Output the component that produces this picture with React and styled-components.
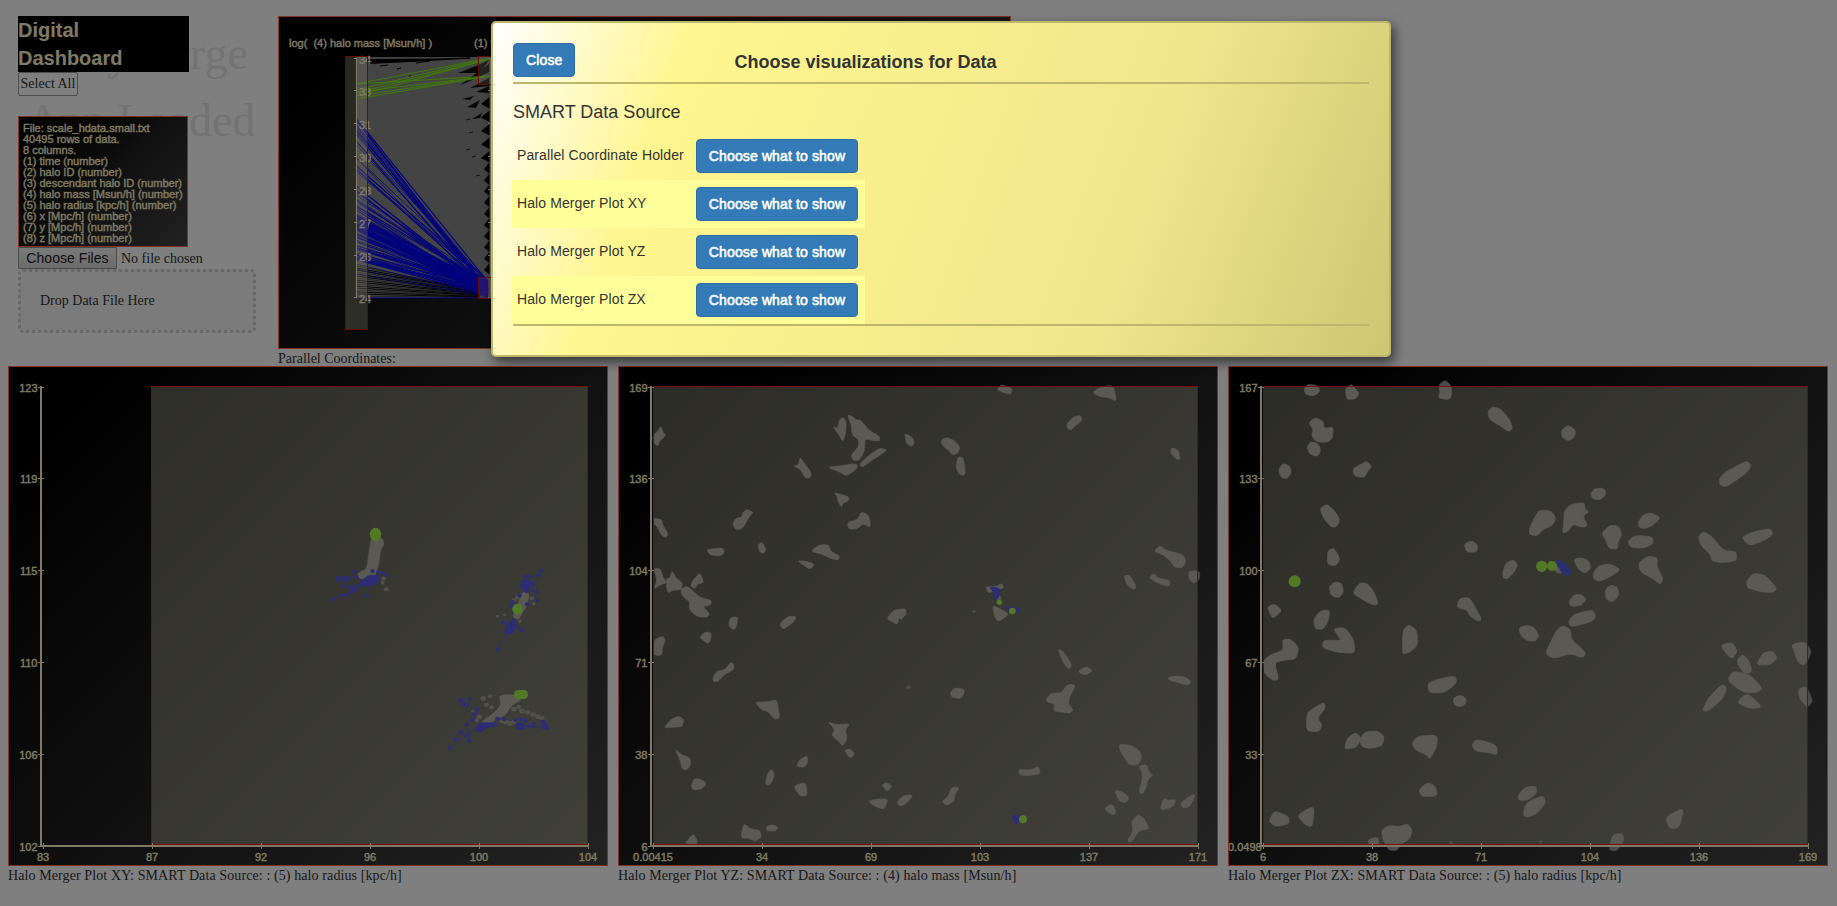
import React from "react";
import styled, { createGlobalStyle } from "styled-components";

const sans = '"Liberation Sans", Arial, sans-serif';
const serif = '"Liberation Serif", "Times New Roman", serif';

const GlobalStyle = createGlobalStyle`
  *, *::before, *::after { box-sizing: border-box; }
  html, body { margin: 0; height: 100%; background: #fff; overflow: hidden; }
  body { font: 14px/16px ${serif}; color: #333; }
`;

const Page = styled.div`
  position: relative;
  width: 1837px;
  height: 906px;
  padding: 16px 9px 0 8px;
  overflow: hidden;
`;

const TopRow = styled.div`
  display: flex;
  height: 350px;
  padding-left: 10px;
  gap: 22px;
`;

const Sidebar = styled.aside`
  position: relative;
  width: 238px;
  display: flex;
  flex-direction: column;
  align-items: flex-start;
  > * { position: relative; }
`;

const Status = styled.div`
  && { position: absolute; }
  top: 4px;
  left: 0;
  width: 246px;
  text-align: center;
  font-size: 46px;
  line-height: 67px;
  color: #e6e6e6;
`;

const StatusLine = styled.div`
  padding-left: ${(p) => p.$indent || 0}px;
`;

const Brand = styled.h1`
  margin: 0;
  width: 171px;
  height: 56px;
  padding-right: 60px;
  background: #000;
  color: #fff5cc;
  font: bold 20px/28px ${sans};
`;

const SelectAll = styled.button`
  width: 60px;
  height: 24px;
  padding: 0;
  border: 1px solid #999;
  border-radius: 2px;
  background: transparent;
  font: 14px/16px ${serif};
  color: #333;
  white-space: nowrap;
`;

const gradientPanel = "linear-gradient(135deg, #000 8%, #444 100%)";

const FileInfo = styled.div`
  margin-top: 20px;
  width: 170px;
  height: 131px;
  padding: 6px 0 0 4px;
  border: 1px solid tomato;
  background: ${gradientPanel};
  color: #fff5cc;
  font: 11px/11px ${sans};
  -webkit-text-stroke: 0.35px #fff5cc;
  white-space: nowrap;
`;

const FileRow = styled.div`
  display: flex;
  align-items: center;
  gap: 4px;
  height: 22px;
  span { padding-top: 2px; }
`;

const FileButton = styled.button`
  width: 99px;
  height: 22px;
  padding: 0;
  border: 1px solid #999;
  border-radius: 1px;
  background: linear-gradient(#f4f4f4, #d8d8d8);
  font: 14px/18px ${sans};
  letter-spacing: 0.05px;
  color: #222;
`;

const DropZone = styled.div`
  width: 238px;
  height: 64px;
  padding: 21px 19px;
  border: 3px dotted #cfcfcf;
  border-radius: 5px;
  background: rgba(0, 0, 0, 0.03);
`;

const Figure = styled.figure`
  margin: 0;
  width: ${(p) => p.$w}px;
`;

const Canvas = styled.div`
  height: ${(p) => p.$h}px;
  border: 1px solid tomato;
  background: ${gradientPanel};
  svg { display: block; width: 100%; height: 100%; }
  text {
    font: 11px ${sans};
    fill: #fff5cc;
    stroke: #fff5cc;
    stroke-width: 0.35px;
    white-space: pre;
  }
`;

const Caption = styled.figcaption`
  height: 18px;
  line-height: 17px;
  padding-top: 1px;
  letter-spacing: ${(p) => p.$track || 0}px;
  white-space: nowrap;
`;

const PlotRow = styled.div`
  display: flex;
  gap: 10px;
`;

const Backdrop = styled.div`
  position: absolute;
  inset: 0;
  background: rgba(0, 0, 0, 0.5);
`;

const Dialog = styled.section`
  position: absolute;
  top: 21px;
  left: 491px;
  width: 900px;
  height: 336px;
  padding: 20px;
  border: 2px solid #bdb76b;
  border-radius: 5px;
  background: linear-gradient(110deg, #fff 0%, #fff68f 20%, #f0e68c 70%, #cdc673 100%);
  box-shadow: 3px 5px 12px rgba(0, 0, 0, 0.6);
  font: 14px/20px ${sans};
  color: #333;
`;

const DialogHead = styled.header`
  display: grid;
  grid-template-columns: 62px 1fr 213px;
  height: 41px;
  border-bottom: 2px solid #bdb76b;
`;

const DialogTitle = styled.h2`
  margin: 9px 0 0;
  text-align: center;
  font: bold 18px/20px ${sans};
`;

const Button = styled.button`
  height: 34px;
  padding: 0 12px;
  border: 1px solid #2e6da4;
  border-radius: 4px;
  background: #337ab7;
  color: #fff;
  font: 14px/20px ${sans};
  letter-spacing: 0.13px;
  -webkit-text-stroke: 0.55px #fff;
  white-space: nowrap;
`;

const SourceName = styled.h3`
  margin: 18px 0 10px;
  font: 18px/20px ${sans};
`;

const Choices = styled.div`
  width: 353px;
  margin-left: -1px;
`;

const Choice = styled.div`
  display: grid;
  grid-template-columns: 179px 162px;
  height: 48px;
  padding: 7px 0 7px 5px;
  background: ${(p) => (p.$striped ? "#ff9" : "transparent")};
  span { padding-top: 6px; letter-spacing: 0.1px; }
  ${Button} { padding: 0; }
`;

const DialogFoot = styled.footer`
  border-top: 2px solid #bdb76b;
`;

/* Deterministic noise source for the line bundles. */
const makeRandom = (seed) => () => {
  seed = (seed * 16807) % 2147483647;
  return seed / 2147483647;
};

/* Closed outline of a point list, with each corner eased. */
const outline = (text) => {
  const p = text.trim().split(/\s+/).map((s) => s.split(",").map(Number));
  const lerp = (a, b, t) => `${(a[0] + (b[0] - a[0]) * t).toFixed(1)} ${(a[1] + (b[1] - a[1]) * t).toFixed(1)}`;
  const n = p.length;
  let d = "";
  p.forEach((q, i) => {
    const before = p[(i + n - 1) % n];
    const after = p[(i + 1) % n];
    d += `${i ? "L" : "M"}${lerp(q, before, 0.33)}Q${q[0]} ${q[1]} ${lerp(q, after, 0.33)}`;
  });
  return d + "Z";
};

const Blobs = ({ at, scale = [1 / 3, 1 / 3], list, color = "#949494" }) => (
  <g
    transform={`translate(${at[0]} ${at[1]}) scale(${scale[0]} ${scale[1]})`}
    fill={color}
    stroke={color}
    strokeWidth="2"
    strokeLinejoin="round"
  >
    {list.trim().split("\n").map((t, i) => (
      <path key={i} d={outline(t)} />
    ))}
  </g>
);

const Dots = ({ at, scale = [1 / 3, 1 / 3], r = 4, list, color = "#00f" }) => (
  <g transform={`translate(${at[0]} ${at[1]}) scale(${scale[0]} ${scale[1]})`} fill={color}>
    {list.trim().split(/\s+/).map((t, i) => {
      const [x, y, rr] = t.split(",").map(Number);
      return <circle key={i} cx={x} cy={y} r={rr || r} />;
    })}
  </g>
);

const ScatterPlot = ({ x, brushX, yLabels, xLabels, caption, children }) => {
  const ys = [387, 478.5, 570.5, 662.5, 754, 846];
  return (
    <Figure $w={600}>
      <Canvas $h={500}>
        <svg viewBox={`${x + 1} 367 598 498`}>
          {children}
          <rect x={brushX} y="386.5" width={x + 579.5 - brushX} height="458" fill="rgba(228,226,196,.4)" stroke="#f51800" />
          <path d={`M${x + 33} 386V847M${x + 32} 846H${x + 580}`} stroke="#fff5cc" strokeWidth="2" fill="none" />
          {ys.map((y, i) => (
            <g key={i}>
              <path d={`M${x + 30} ${Math.floor(y) + 0.5}h6M${x + 35.5 + i * 109} 843v6`} stroke="#fff5cc" />
              <text x={yLabels[i].length > 4 ? x : x + 29.5} y={Math.floor(y) + 5} textAnchor={yLabels[i].length > 4 ? "start" : "end"}>
                {yLabels[i]}
              </text>
              <text x={x + 35 + i * 109} y="861" textAnchor="middle">
                {xLabels[i]}
              </text>
            </g>
          ))}
        </svg>
      </Canvas>
      <Caption $track={0.1}>{caption}</Caption>
    </Figure>
  );
};

const ParallelPlot = () => {
  const rnd = makeRandom(77);
  const blue = [];
  for (let i = 0; i < 24; i++) blue.push([118 + rnd() * 75, 280 + rnd() * 14]);
  for (let i = 0; i < 34; i++) blue.push([185 + rnd() * 45, 282 + rnd() * 14]);
  for (let i = 0; i < 56; i++) blue.push([215 + rnd() * 46, 284 + rnd() * 13]);
  const dark = [];
  for (let i = 0; i < 16; i++) dark.push([266 + i * 2, 290 + i * 0.5]);
  const labels = [["34", 58], ["33", 90], ["31", 123], ["30", 156], ["28", 189], ["27", 222], ["26", 255], ["24", 297]];
  const teeth = [];
  for (let y = 103; y < 278; y += y < 150 ? 13.5 : 11.2) teeth.push(y);
  return (
    <Canvas $h={333}>
      <svg viewBox="279 17 731 331">
        <rect x="356" y="57" width="640" height="241" fill="#888" />
        <path d="M368 59.5L440 59L470 58L420 61L368 63.5Z M380 66l8-1M397 69l4-1M409 76h2M416 63l14-2" fill="#000" stroke="#000" />
        {["458,73 476,66 489,60 480,73", "460,85 489,64 489,72 470,81", "470,88 489,78 489,86", "476,92 489,86 489,93", "462,99 474,96 470,100", "467,107 480,100 476,108", "472,119 482,113 480,118"].map((s) => (
          <polygon key={s} points={s} fill="#111" />
        ))}
        {teeth.map((y, i) => (
          <polygon key={y} points={`${i < 5 ? 481 : 484},${y + 1} 489.5,${y - 6} 489.5,${y + 5.5}`} fill="#080808" />
        ))}
        {[[466, 120], [469, 133], [466, 150], [472, 157], [476, 176]].map(([x, y]) => (
          <path key={y} d={`M${x} ${y}l4-1`} stroke="#222" />
        ))}
        {dark.map(([a, b], i) => (
          <path key={i} d={`M356 ${a}L480 ${b}`} stroke="#080808" strokeWidth={i % 3 ? 1.1 : 0.5} />
        ))}
        {blue.map(([a, b], i) => (
          <path key={i} d={`M356 ${a}L488 ${b}`} stroke="#0000f8" strokeWidth={i % 4 ? 0.75 : 1.1} />
        ))}
        {[[264, 296], [269, 297], [274, 297]].map(([a, b]) => (
          <path key={a} d={`M356 ${a}L488 ${b}`} stroke="#0000c8" strokeWidth=".7" />
        ))}
        <path d="M356 298H490" stroke="#0000d8" />
        {[[84, 58], [90, 58], [93, 59], [96, 59], [84, 76], [92, 76], [96, 76], [99, 76]].map(([a, b], i) => (
          <path key={i} d={`M356 ${a}L490 ${b}`} stroke="#7fff00" strokeWidth=".9" />
        ))}
        <rect x="345.5" y="56.5" width="22" height="273" fill="rgba(228,226,196,.35)" />
        <path d="M490.5 58V298M356.5 58V298" stroke="#fff5cc" strokeWidth="1.1" />
        {labels.map(([t, y]) => (
          <g key={t}>
            <path d={`M354 ${y + 0.5}h3M488 ${y + 0.5}h3`} stroke="#fff5cc" />
            <text x="359" y={y + 6}>{t}</text>
          </g>
        ))}
        <rect x="345.5" y="56.5" width="22" height="273" fill="none" stroke="#c81400" />
        <rect x="478.5" y="56.5" width="22" height="28" fill="rgba(228,226,196,.25)" stroke="#c81400" />
        <rect x="478.5" y="277.5" width="22" height="21" fill="rgba(228,150,196,.3)" stroke="#c81400" />
        <text x="289" y="47">{"log(  (4) halo mass [Msun/h] )"}</text>
        <text x="474" y="47">(1) time</text>
      </svg>
    </Canvas>
  );
};

const xyScale = [1 / 2.529, 1 / 2.872];
const zxScale = [1 / 2.541, 1 / 3];

const HaloXY = () => (
  <>
    <Blobs at={[0, 360]} scale={xyScale} list={`
940,510 968,512 971,530 962,545 958,585 950,612 945,628 908,628 904,612 928,600 934,545
1314,690 1318,672 1330,662 1338,675 1333,705 1318,730 1312,745 1296,738
1262,962 1310,962 1320,975 1295,990 1278,1020 1255,1030 1240,1045 1215,1042 1252,1012 1268,990`} />
    <Dots at={[0, 360]} scale={xyScale} color="#767676" list="968,640,5 977,659,6 970,628,6 1258,736 1275,732 1300,690,6 1308,682,6 1345,685,6 1350,700 1315,750,5 1222,972,7 1240,966,6 1230,990,6 1243,998,6 1195,1008 1212,1025,7 1205,1035,6 1300,1003,7 1312,996,6 1320,1008,7 1334,1012,7 1348,1018,7 1360,1024,7 1370,1028,7 1280,1040,7 1290,1044,7 1270,1038,6 1300,1040,6" />
    <g transform="translate(0 360) scale(.3954 .3482)" stroke="#00f" strokeWidth="2.5" fill="none">
      <path d="M841 688L868 676L900 660M850 625L880 630L900 615M928 678L932 645M1258 832L1285 780M1370 604L1345 650L1357 690M1137 1115L1200 1060M1151 1090L1182 1048M1182 1047L1186 1092M1165 975L1185 990M1207 1003L1197 1040M1310 1050L1385 1055" />
    </g>
    <Blobs at={[0, 360]} scale={xyScale} color="#00f" list={`
905,645 930,618 955,618 962,632 945,648 912,650
880,655 900,652 905,665 888,670
1312,650 1322,630 1345,632 1340,660 1332,672
1290,750 1302,742 1306,765 1295,788 1275,785 1280,762
1200,1065 1210,1042 1258,1042 1255,1052 1228,1055 1220,1070
1302,1045 1325,1040 1328,1062 1308,1062`} />
    <Dots at={[0, 360]} scale={xyScale} r={5.8} list="841,688 866,677 877,673 928,678 853,626 858,634 868,627 880,625 876,634 894,608,6 901,625 942,606,6 958,610 967,612 977,618 870,650 890,650 906,650 918,645 1370,604 1362,618 1348,645 1355,665 1357,690 1330,622 1341,622 1314,676 1296,695 1294,707 1333,702,6 1272,754 1284,762 1312,768 1321,777 1258,832 1137,1115 1151,1090 1165,1070 1182,1047 1182,1076 1186,1092 1165,977 1172,987 1188,974 1182,994 1207,1003 1200,1017 1195,1034 1258,1030 1275,1032 1304,1034 1318,1032 1330,1035 1338,1052 1350,1045 1373,1038 1378,1047,7 1383,1058,6 1375,1054" />
    <g fill="#7fff00">
      <ellipse cx="375.5" cy="534.3" rx="5.7" ry="6.6" />
      <circle cx="517.5" cy="609" r="5.2" />
      <rect x="514" y="690" width="14" height="9" rx="4.5" />
    </g>
  </>
);

const HaloYZ = () => (
  <>
    <Blobs at={[610, 360]} list={`
153,198 160,220 168,224 158,235 148,245 144,258 132,250 127,230 144,212
712,165 725,168 740,180 752,180 778,212 808,228 810,242 790,242 765,236 764,270 750,300 730,302 723,285 745,262 747,240 726,225 724,195
700,172 709,185 707,220 698,246 690,228 668,200 684,205 688,178
748,312 785,280 810,264 832,270 815,282 790,298 768,314 756,322
652,322 685,318 740,310 742,325 725,337 708,348 688,335
570,292 582,308 604,338 601,354 585,354 572,328 550,318 565,315
672,397 700,405 718,412 714,424 700,428 694,442 684,425 682,410
398,458 410,448 430,456 418,470 406,492 394,508 376,508 367,490 380,474 395,472
130,475 155,478 158,495 175,522 168,533 155,527 142,500 130,490
290,568 310,567 338,563 343,575 335,588 300,585
443,555 456,546 468,568 462,580 450,577
752,455 777,465 782,503 760,490 740,507 716,507 712,487 745,478
602,574 628,554 656,554 662,575 690,588 684,601 660,594 635,582
562,602 590,604 614,613 600,628 580,615
130,624 152,626 158,650 170,668 150,675 132,687 142,660
186,632 198,655 218,668 214,690 190,690 172,700 168,655 180,655
270,637 282,668 262,672 255,686 241,678 250,660
212,688 230,678 245,690 270,712 306,722 300,737 278,738 299,762 292,772 262,770 238,750 240,725 216,708
360,773 384,770 380,795 374,810 356,800
510,790 535,768 560,770 552,785 535,798 520,807 512,800
830,777 850,750 887,746 887,760 868,770 862,794 848,785
883,220 905,230 914,248 905,260 890,252`} />
    <Blobs at={[900, 360]} list={`
291,90 303,73 337,85 333,103 312,98
576,97 605,80 638,76 646,100 649,124 625,112 600,110
503,188 522,170 542,166 546,182 525,197 513,212 500,202
124,240 140,232 165,243 180,262 174,280 156,284 145,270 126,256
173,290 190,292 197,344 180,346 168,325
813,263 834,268 841,297 830,299 813,280
762,574 780,556 800,572 850,583 858,605 847,624 823,622 812,602 785,582
672,646 690,646 710,682 700,689 680,674
747,655 760,640 775,655 808,660 810,677 790,677
866,633 900,633 898,660 880,670 866,655
256,680 290,680 305,670 312,684 285,690 266,700
288,703 304,710 300,728 290,720
277,736 300,746 327,762 310,775 298,784 286,777
-3,750 15,746 19,762 0,782`} />
    <Blobs at={[610, 630]} list={`
133,28 160,18 166,32 157,50 156,76 131,76
268,22 285,6 304,8 302,30 294,42
308,145 320,123 345,120 362,96 372,103 370,120 345,132 325,154 311,156
435,216 470,216 500,209 505,235 509,264 493,268 475,245 455,240
163,294 180,270 205,258 222,268 217,290 185,292
652,274 680,285 720,281 705,300 712,325 698,349 685,332 664,317 675,298
704,360 722,356 735,375 718,385
195,356 215,375 240,383 242,402 232,420 216,417 212,395
243,470 252,446 270,446 290,460 275,477 252,480
560,410 568,390 592,376 594,395 584,412
473,430 485,417 494,435 482,464 465,464
550,468 587,456 592,497 570,499
774,513 800,508 834,506 824,538 795,530
815,465 830,457 847,468 832,485
860,517 880,496 910,495 892,518 870,530
393,615 402,580 420,596 450,601 455,620 437,634 415,624 396,624
468,590 485,584 504,590 497,604 470,602
223,642 250,610 262,632 260,643`} />
    <Blobs at={[900, 630]} list={`
473,57 488,63 517,106 505,117 492,102
535,122 560,110 578,122 560,135 543,132
804,140 850,138 874,155 862,167 835,157 808,152
435,214 453,188 485,190 500,164 525,163 520,182 508,200 505,222 520,240 510,250 488,247 460,242 465,222
150,188 165,173 194,178 190,195 180,206 156,202
657,342 695,346 720,363 725,385 714,405 688,405 676,387 660,362
716,408 740,403 746,425 760,436 745,445 740,470 728,492 716,487 727,450 726,425
355,418 395,420 415,408 422,432 380,437 358,434
643,480 668,486 687,502 680,517 658,515
611,535 637,520 650,550 635,555
781,537 792,503 805,512 828,508 820,530 792,539
841,520 860,505 886,491 880,510 867,532 848,534
694,575 712,555 732,563 748,597 722,600 710,612 695,637 681,634 700,602
126,515 145,498 155,471 179,473 165,492 162,514 140,526`} />
    <Dots at={[610, 630]} color="#686868" r={6} list="895,172" />
    <Dots at={[900, 360]} color="#686868" r={5} list="222,754" />
    <Blobs at={[900, 360]} color="#00f" list={`
268,680 298,684 300,700 292,720 282,718 282,700
315,740 330,742 358,743 356,760 330,758`} />
    <Blobs at={[900, 630]} color="#00f" list={`
334,558 359,553 359,575 348,584`} />
    <Dots at={[900, 360]} color="#7fff00" list="298,727,8 337,753,10" />
    <Dots at={[900, 630]} color="#7fff00" list="369,568,12" />
  </>
);

const HaloZX = () => (
  <>
    <Blobs at={[1220, 360]} list={`
252,88 262,73 294,76 300,95 282,108 258,104
376,85 395,72 408,88 418,100 407,117 380,119
656,75 675,60 692,75 696,98 690,120 655,114 660,95
802,158 816,140 842,146 870,180 878,205 867,216 840,197 810,180
266,188 285,173 310,183 312,206 340,200 337,237 320,247 288,246 274,225 280,210
261,260 273,245 294,250 303,270 292,290 268,282
175,328 190,310 210,318 214,338 202,356 183,353
399,325 425,312 440,303 456,320 442,335 434,353 402,348
300,445 320,432 342,450 360,478 350,502 331,500 308,470
323,572 340,564 352,580 360,600 347,618 322,614
732,552 755,542 774,555 770,576 740,577
849,635 858,608 882,599 893,615 882,638 860,658 848,652
327,680 345,665 365,670 371,695 357,714 333,707
397,700 418,668 442,670 462,695 476,732 460,736 430,720
710,743 718,715 747,712 762,735 785,777 777,785 748,767 742,750
142,740 165,732 187,752 158,776 150,760
280,780 300,752 330,750 324,785 310,808 286,808`} />
    <Blobs at={[1520, 360]} list={`
124,210 145,195 168,212 162,234 145,243 126,232
212,402 223,386 252,384 259,402 242,420 218,417
45,470 58,450 95,453 108,475 97,497 70,507 52,528 27,524 30,500
132,455 150,433 193,427 195,448 208,456 188,468 204,497 185,503 160,492 145,514 127,520 132,480
244,520 270,495 297,498 306,525 294,545 293,568 266,565 258,540
323,545 343,526 398,530 399,552 370,565 332,562
354,487 370,463 395,459 422,472 402,494 375,506 357,502
597,358 613,338 650,318 680,303 694,315 682,337 650,360 620,380 600,376
534,530 550,514 577,530 610,572 648,574 651,602 610,608 577,605 570,582 543,557
664,532 700,515 753,505 759,525 720,547 688,557
355,610 380,589 413,592 410,620 430,655 422,674 400,657 362,637
161,597 185,593 207,603 213,625 195,641 173,626
219,643 233,618 270,611 302,628 277,647 240,665 222,658
255,690 270,675 292,680 297,705 278,727 258,718
147,724 163,703 187,705 200,718 182,737 152,740
144,784 163,762 217,749 229,770 212,787 153,801
679,665 700,639 737,646 772,687 757,698 720,695 682,684
100,625 118,618 130,640 110,638`} />
    <Blobs at={[1220, 630]} scale={zxScale} list={`
158,28 182,28 201,55 192,88 165,90 138,98 150,148 135,152 112,130 109,95 125,76 162,60
288,-4 318,-8 340,30 343,70 300,67 260,54 263,30 308,32 300,18
465,0 480,-16 500,0 503,45 482,67 463,74
760,-8 780,-14 798,-8 811,15 802,34 780,32 763,15
855,0 872,-14 892,0 892,28 930,67 922,84 888,70 850,86 826,72 843,30
1270,46 1302,37 1315,65 1300,89
1312,92 1328,72 1345,93 1352,127 1330,131
1362,105 1380,68 1405,63 1417,85 1397,105
1452,42 1487,35 1504,65 1487,105 1470,100 1460,67
1289,152 1303,122 1350,136 1379,177 1362,188 1330,188
1225,244 1240,205 1275,162 1289,173 1277,207 1242,242
1312,217 1340,188 1379,232 1345,236
1469,178 1490,168 1507,215 1492,232 1473,207
527,160 555,147 598,137 602,158 572,188 532,189
222,245 265,216 268,235 247,265 260,285 252,305 222,304 219,280
317,355 323,325 345,307 360,325 347,352 323,357
355,330 368,305 402,303 418,320 412,348 380,356 360,350
487,340 503,318 553,315 551,350 533,389 525,374 498,362
639,345 653,327 703,345 705,376 680,367 648,363
505,480 525,458 547,466 553,498 512,500
757,497 773,473 803,467 805,490 782,511 759,511
770,554 778,518 822,496 828,520 802,554 778,562
124,574 138,541 175,560 176,582 140,590
196,555 240,526 235,592 213,582
410,600 430,586 455,590 477,581 489,600 482,627 460,642 450,662 428,660 413,625
375,630 402,620 404,643 380,647
988,660 998,612 1025,611 1025,635 1007,664
1131,562 1179,532 1168,592 1143,597`} />
    <Dots at={[1220, 630]} scale={zxScale} color="#949494" list="609,213,17" />
    <Dots at={[1220, 630]} scale={zxScale} color="#686868" r={5} list="588,638 814,636" />
    <Blobs at={[1520, 360]} color="#00f" list={`
106,602 127,602 152,630 147,648 125,640`} />
    <Dots at={[1220, 360]} color="#7fff00" list="224,664,18" />
    <Dots at={[1520, 360]} color="#7fff00" list="65,619,17 96,618,15" />
  </>
);

const fileLines = [
  "File: scale_hdata.small.txt",
  "40495 rows of data.",
  "8 columns.",
  "(1) time (number)",
  "(2) halo ID (number)",
  "(3) descendant halo ID (number)",
  "(4) halo mass [Msun/h] (number)",
  "(5) halo radius [kpc/h] (number)",
  "(6) x [Mpc/h] (number)",
  "(7) y [Mpc/h] (number)",
  "(8) z [Mpc/h] (number)",
];

const choices = ["Parallel Coordinate Holder", "Halo Merger Plot XY", "Halo Merger Plot YZ", "Halo Merger Plot ZX"];

export default function App() {
  return (
    <>
      <GlobalStyle />
      <Page>
        <TopRow>
          <Sidebar>
            <Status>
              <StatusLine $indent={9}>Very Large</StatusLine>
              <StatusLine>App Loaded</StatusLine>
            </Status>
            <Brand>Digital Dashboard</Brand>
            <SelectAll>Select All</SelectAll>
            <FileInfo>
              {fileLines.map((line) => (
                <div key={line}>{line}</div>
              ))}
            </FileInfo>
            <FileRow>
              <FileButton>Choose Files</FileButton>
              <span>No file chosen</span>
            </FileRow>
            <DropZone>Drop Data File Here</DropZone>
          </Sidebar>
          <Figure $w={733}>
            <ParallelPlot />
            <Caption>Parallel Coordinates:</Caption>
          </Figure>
        </TopRow>
        <PlotRow>
          <ScatterPlot
            x={8}
            brushX={151.5}
            yLabels={["123", "119", "115", "110", "106", "102"]}
            xLabels={["83", "87", "92", "96", "100", "104"]}
            caption="Halo Merger Plot XY: SMART Data Source: : (5) halo radius [kpc/h]"
          >
            <HaloXY />
          </ScatterPlot>
          <ScatterPlot
            x={618}
            brushX={653.5}
            yLabels={["169", "136", "104", "71", "38", "6"]}
            xLabels={["0.00415", "34", "69", "103", "137", "171"]}
            caption="Halo Merger Plot YZ: SMART Data Source: : (4) halo mass [Msun/h]"
          >
            <HaloYZ />
          </ScatterPlot>
          <ScatterPlot
            x={1228}
            brushX={1263.5}
            yLabels={["167", "133", "100", "67", "33", "0.0498"]}
            xLabels={["6", "38", "71", "104", "136", "169"]}
            caption="Halo Merger Plot ZX: SMART Data Source: : (5) halo radius [kpc/h]"
          >
            <HaloZX />
          </ScatterPlot>
        </PlotRow>
        <Backdrop />
        <Dialog>
          <DialogHead>
            <Button>Close</Button>
            <DialogTitle>Choose visualizations for Data</DialogTitle>
          </DialogHead>
          <SourceName>SMART Data Source</SourceName>
          <Choices>
            {choices.map((name, i) => (
              <Choice key={name} $striped={i % 2 === 1}>
                <span>{name}</span>
                <Button>Choose what to show</Button>
              </Choice>
            ))}
          </Choices>
          <DialogFoot />
        </Dialog>
      </Page>
    </>
  );
}
